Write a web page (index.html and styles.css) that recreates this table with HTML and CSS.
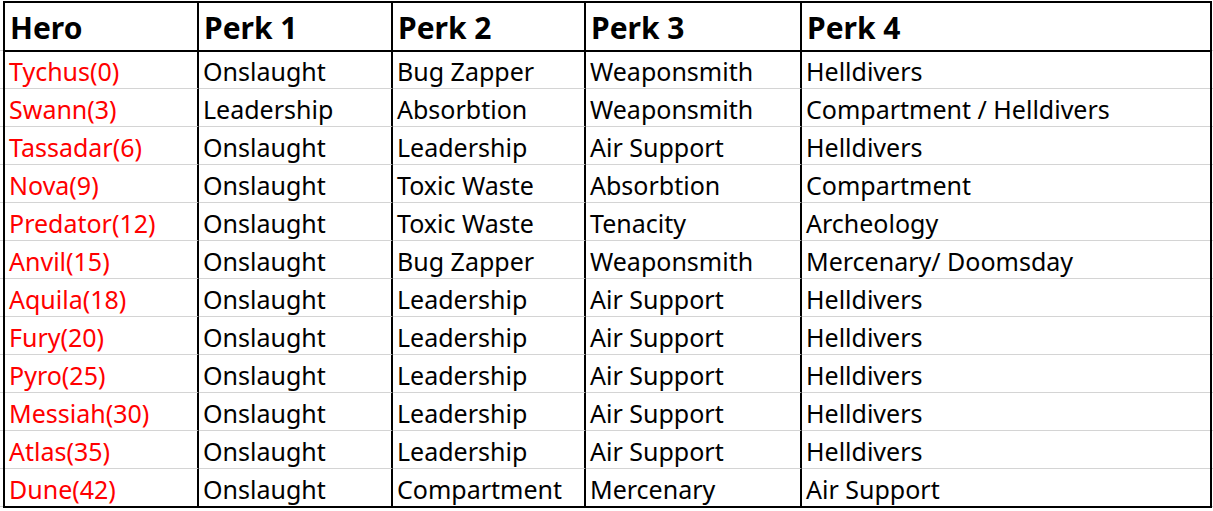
FILE: index.html
```html
<!DOCTYPE html>
<html>
<head>
<meta charset="utf-8">
<link rel="stylesheet" href="styles.css">
</head>
<body>
<div class="sheet">
  <div class="cell head">Hero</div><div class="cell head">Perk 1</div><div class="cell head">Perk 2</div><div class="cell head">Perk 3</div><div class="cell head">Perk 4</div>

  <div class="cell hero first">Tychus(0)</div><div class="cell first">Onslaught</div><div class="cell first">Bug Zapper</div><div class="cell first">Weaponsmith</div><div class="cell first">Helldivers</div>
  <div class="cell hero">Swann(3)</div><div class="cell">Leadership</div><div class="cell">Absorbtion</div><div class="cell">Weaponsmith</div><div class="cell">Compartment / Helldivers</div>
  <div class="cell hero">Tassadar(6)</div><div class="cell">Onslaught</div><div class="cell">Leadership</div><div class="cell">Air Support</div><div class="cell">Helldivers</div>
  <div class="cell hero">Nova(9)</div><div class="cell">Onslaught</div><div class="cell">Toxic Waste</div><div class="cell">Absorbtion</div><div class="cell">Compartment</div>
  <div class="cell hero">Predator(12)</div><div class="cell">Onslaught</div><div class="cell">Toxic Waste</div><div class="cell">Tenacity</div><div class="cell">Archeology</div>
  <div class="cell hero">Anvil(15)</div><div class="cell">Onslaught</div><div class="cell">Bug Zapper</div><div class="cell">Weaponsmith</div><div class="cell">Mercenary/ Doomsday</div>
  <div class="cell hero">Aquila(18)</div><div class="cell">Onslaught</div><div class="cell">Leadership</div><div class="cell">Air Support</div><div class="cell">Helldivers</div>
  <div class="cell hero">Fury(20)</div><div class="cell">Onslaught</div><div class="cell">Leadership</div><div class="cell">Air Support</div><div class="cell">Helldivers</div>
  <div class="cell hero">Pyro(25)</div><div class="cell">Onslaught</div><div class="cell">Leadership</div><div class="cell">Air Support</div><div class="cell">Helldivers</div>
  <div class="cell hero">Messiah(30)</div><div class="cell">Onslaught</div><div class="cell">Leadership</div><div class="cell">Air Support</div><div class="cell">Helldivers</div>
  <div class="cell hero">Atlas(35)</div><div class="cell">Onslaught</div><div class="cell">Leadership</div><div class="cell">Air Support</div><div class="cell">Helldivers</div>
  <div class="cell hero last">Dune(42)</div><div class="cell last">Onslaught</div><div class="cell last">Compartment</div><div class="cell last">Mercenary</div><div class="cell last">Air Support</div>
</div>
</body>
</html>
```

FILE: styles.css
```css
html, body {
  margin: 0;
  padding: 0;
}
body {
  width: 1213px;
  height: 511px;
  overflow: hidden;
  background-color: #ffffff;
  background-image:
    linear-gradient(to bottom, transparent 50px, #d4d4d4 50px, #d4d4d4 51px, transparent 51px),
    repeating-linear-gradient(to bottom, transparent 0, transparent 37px, #d4d4d4 37px, #d4d4d4 38px);
  background-position: 0 0, 0 51px;
  background-repeat: no-repeat, repeat-x;
  background-size: 100% 100%, 100% 456px;
  font-family: "Noto Sans", "Open Sans", sans-serif;
  color: #000;
}
.sheet {
  display: grid;
  grid-template-columns: 194px 194px 193px 216px 408px;
  grid-template-rows: 49px 37px repeat(10, 38px) 37px;
  width: fit-content;
  margin: 1px 0 0 3px;
  border: 2px solid #000;
  background: #fff;
}
.cell {
  box-sizing: border-box;
  border-right: 2px solid #000;
  border-bottom: 1px solid #d4d4d4;
  padding: 2px 0 0 4px;
  font-size: 25px;
  line-height: 36px;
  white-space: nowrap;
  overflow: hidden;
}
.cell:nth-child(5n) {
  border-right: none;
}
.cell.first {
  padding-top: 1px;
}
.cell.head {
  border-bottom: 2px solid #000;
  font-weight: 700;
  font-size: 30px;
  line-height: 45px;
  padding: 2px 0 0 5px;
}
.cell.hero {
  color: #ff0000;
}
.cell.last {
  border-bottom: none;
}
```
